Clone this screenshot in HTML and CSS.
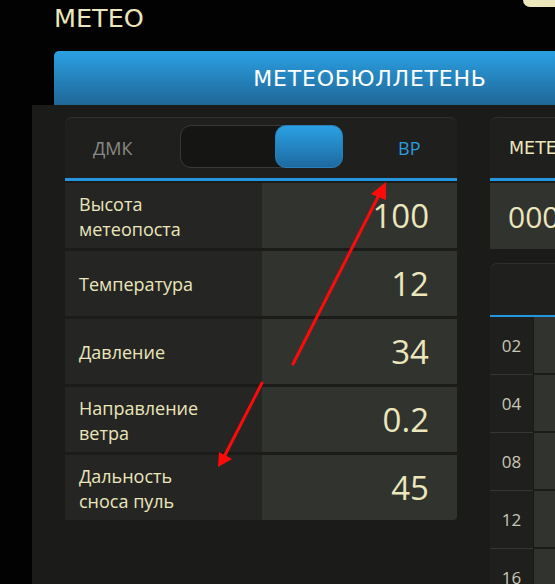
FILE: index.html
```html
<!DOCTYPE html>
<html lang="ru">
<head>
<meta charset="utf-8">
<title>METEO</title>
<link rel="stylesheet" href="styles.css">
</head>
<body>
<div class="page">
  <div class="corner-chip"></div>
  <header class="app-title">METEO</header>
  <div class="tab">МЕТЕОБЮЛЛЕТЕНЬ</div>
  <main class="panel">
    <section class="card card-left">
      <div class="card-head toggle-head">
        <span class="opt opt-off">ДМК</span>
        <div class="track"><div class="knob"></div></div>
        <span class="opt opt-on">ВР</span>
      </div>
      <div class="rows">
        <div class="row"><div class="label">Высота<br>метеопоста</div><div class="value">100</div></div>
        <div class="row"><div class="label">Температура</div><div class="value">12</div></div>
        <div class="row"><div class="label">Давление</div><div class="value">34</div></div>
        <div class="row"><div class="label">Направление<br>ветра</div><div class="value">0.2</div></div>
        <div class="row"><div class="label">Дальность<br>сноса пуль</div><div class="value">45</div></div>
      </div>
    </section>
    <div class="right-col">
      <section class="card card-right">
        <div class="card-head title-head">МЕТЕОСРЕДНИЙ</div>
        <div class="code-row">0000-00000</div>
      </section>
      <section class="card card-table">
        <div class="card-head table-head"></div>
        <div class="trow"><div class="hcell">02</div><div class="dcell"></div></div>
        <div class="trow"><div class="hcell">04</div><div class="dcell"></div></div>
        <div class="trow"><div class="hcell">08</div><div class="dcell"></div></div>
        <div class="trow"><div class="hcell">12</div><div class="dcell"></div></div>
        <div class="trow"><div class="hcell">16</div><div class="dcell"></div></div>
      </section>
    </div>
  </main>
  <svg class="annotations" width="555" height="584" viewBox="0 0 555 584">
    <line x1="293" y1="364" x2="380" y2="193" stroke="#ff0a0a" stroke-width="3" stroke-linecap="round"/>
    <polygon points="386,182 371,194 386,200" fill="#ff0a0a"/>
    <line x1="262" y1="383" x2="224" y2="457" stroke="#ff0a0a" stroke-width="3" stroke-linecap="round"/>
    <polygon points="218,467 219,452 232,459" fill="#ff0a0a"/>
  </svg>
</div>
</body>
</html>
```

FILE: styles.css
```css
* { box-sizing: border-box; }
html, body {
  margin: 0;
  padding: 0;
  background: #020202;
  overflow: hidden;
}
.page {
  position: relative;
  width: 555px;
  height: 584px;
  overflow: hidden;
}
.corner-chip {
  position: absolute;
  top: 0;
  left: 523px;
  width: 60px;
  height: 7px;
  background: #ebe6bc;
  border-bottom-left-radius: 7px;
}
.app-title {
  padding-left: 54px;
  font-family: "DejaVu Sans", sans-serif;
  font-size: 25.5px;
  line-height: 36px;
  color: #ebe6bc;
  height: 51px;
}
.tab {
  margin-left: 54px;
  width: 632px;
  height: 54px;
  border-radius: 5px 5px 0 0;
  background: linear-gradient(#2ba0e3, #1f6797);
  color: #ffffff;
  font-family: "DejaVu Sans", sans-serif;
  font-size: 22px;
  letter-spacing: 0.8px;
  display: flex;
  align-items: center;
  justify-content: center;
}
.panel {
  margin-left: 32px;
  width: 700px;
  height: 479px;
  background: #1b1b19;
  padding: 12px 0 0 33px;
  display: flex;
  gap: 33px;
  align-items: flex-start;
}
.card {
  display: flex;
  flex-direction: column;
  flex-shrink: 0;
}
.card-left { width: 392px; }
.card-head {
  background: #1f1f1d;
  border-radius: 7px 7px 0 0;
  box-shadow: inset 0 1px 0 #2f2f2c;
  border-bottom: 3px solid #2496e0;
}
.toggle-head {
  height: 64px;
  display: flex;
  align-items: center;
  font-family: "Open Sans", sans-serif;
  font-size: 18px;
}
.opt-off {
  width: 115px;
  padding-left: 28px;
  color: #8a8a86;
}
.opt-on {
  padding-left: 55px;
  color: #2a9de0;
}
.track {
  width: 163px;
  height: 43px;
  margin-top: -2px;
  border-radius: 11px;
  background: #151514;
  border: 1px solid #383836;
  position: relative;
}
.knob {
  position: absolute;
  right: -1px;
  top: -1px;
  width: 68px;
  height: 43px;
  border-radius: 11px;
  background: linear-gradient(#2aa0e3, #1e6aa0);
  border: 1px solid #2a7fbd;
}
.rows {
  padding-top: 2px;
  display: flex;
  flex-direction: column;
  gap: 3px;
}
.row {
  height: 65px;
  display: flex;
}
.row:last-child .value { border-bottom-right-radius: 4px; }
.label {
  width: 197px;
  background: #252523;
  color: #ebe6bc;
  font-family: "Open Sans", sans-serif;
  font-size: 18px;
  line-height: 25px;
  padding-left: 14px;
  padding-top: 2px;
  display: flex;
  align-items: center;
}
.value {
  flex: 1;
  background: #31332e;
  color: #ebe6bc;
  font-family: "Open Sans", sans-serif;
  font-size: 33px;
  display: flex;
  align-items: center;
  justify-content: flex-end;
  padding-right: 28px;
}
.right-col {
  width: 300px;
  flex-shrink: 0;
  display: flex;
  flex-direction: column;
  gap: 14px;
}
.title-head {
  height: 64px;
  padding-left: 19px;
  display: flex;
  align-items: center;
  font-family: "DejaVu Sans", sans-serif;
  font-size: 17.5px;
  color: #ebe6bc;
  white-space: nowrap;
}
.code-row {
  margin-top: 2px;
  height: 66px;
  background: #31332e;
  color: #ebe6bc;
  font-family: "Open Sans", sans-serif;
  font-size: 30px;
  padding-left: 18px;
  display: flex;
  align-items: center;
  white-space: nowrap;
}
.table-head {
  height: 54px;
  border-bottom-width: 2px;
}
.trow {
  display: flex;
  height: 58px;
}
.hcell {
  width: 43px;
  background: #1f1f1d;
  border-bottom: 1px solid #363634;
  color: #c9c7b6;
  font-family: "Open Sans", sans-serif;
  font-size: 17px;
  display: flex;
  align-items: center;
  justify-content: center;
}
.dcell {
  flex: 1;
  margin-left: 1px;
  background: #31332e;
  border-bottom: 2px solid #1b1b19;
}
.annotations {
  position: absolute;
  top: 0;
  left: 0;
  pointer-events: none;
}
```
